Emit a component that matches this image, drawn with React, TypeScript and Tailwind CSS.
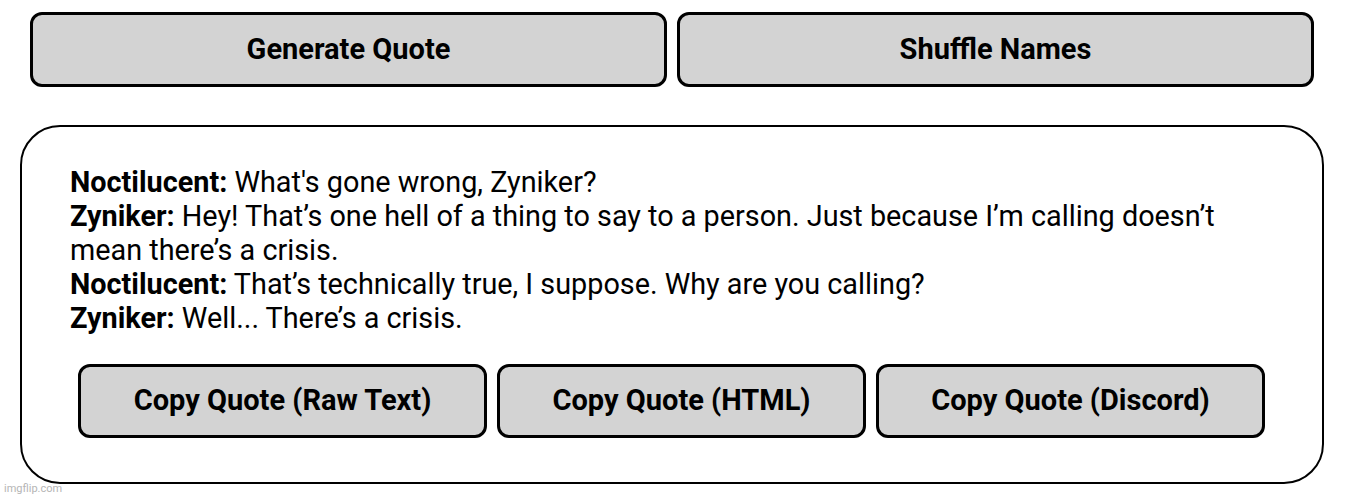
import React from 'react';

const lines: { name: string; text: string }[] = [
  { name: 'Noctilucent:', text: "What's gone wrong, Zyniker?" },
  {
    name: 'Zyniker:',
    text: 'Hey! That’s one hell of a thing to say to a person. Just because I’m calling doesn’t mean there’s a crisis.',
  },
  { name: 'Noctilucent:', text: 'That’s technically true, I suppose. Why are you calling?' },
  { name: 'Zyniker:', text: 'Well... There’s a crisis.' },
];

const copyButtons = [
  { label: 'Copy Quote (Raw Text)', w: 'w-[409px]' },
  { label: 'Copy Quote (HTML)', w: 'w-[369px]' },
  { label: 'Copy Quote (Discord)', w: 'w-[389px]' },
];

const App: React.FC = () => {
  return (
    <div className="relative h-[500px] w-[1349px] bg-white font-['Roboto',sans-serif] text-black">
      {/* top actions */}
      <div className="flex gap-[10px] pl-[30px] pt-[12px]">
        <button className="h-[75px] w-[637px] rounded-[12px] border-[3px] border-black bg-[#d3d3d3] text-[29px] font-bold">
          Generate Quote
        </button>
        <button className="h-[75px] w-[637px] rounded-[12px] border-[3px] border-black bg-[#d3d3d3] text-[29px] font-bold">
          Shuffle Names
        </button>
      </div>

      {/* quote card */}
      <div className="mx-[20px] mt-[38px] h-[359px] w-[1304px] rounded-[40px] border-2 border-black pl-[48px] pr-[60px] pt-[38px]">
        <div className="text-[28.8px] leading-[34px]">
          {lines.map((l, i) => (
            <div key={i}>
              <span className="font-bold">{l.name}</span> {l.text}
            </div>
          ))}
        </div>
        <div className="ml-[8px] mt-[29px] flex gap-[10px]">
          {copyButtons.map(b => (
            <button
              key={b.label}
              className={`h-[74px] shrink-0 whitespace-nowrap rounded-[12px] border-[3px] border-black bg-[#d3d3d3] text-[29px] font-bold ${b.w}`}
            >
              {b.label}
            </button>
          ))}
        </div>
      </div>

      <div className="absolute bottom-[3px] left-[4px] text-[11px] text-[#b5b5b5]">imgflip.com</div>
    </div>
  );
};

export default App;
